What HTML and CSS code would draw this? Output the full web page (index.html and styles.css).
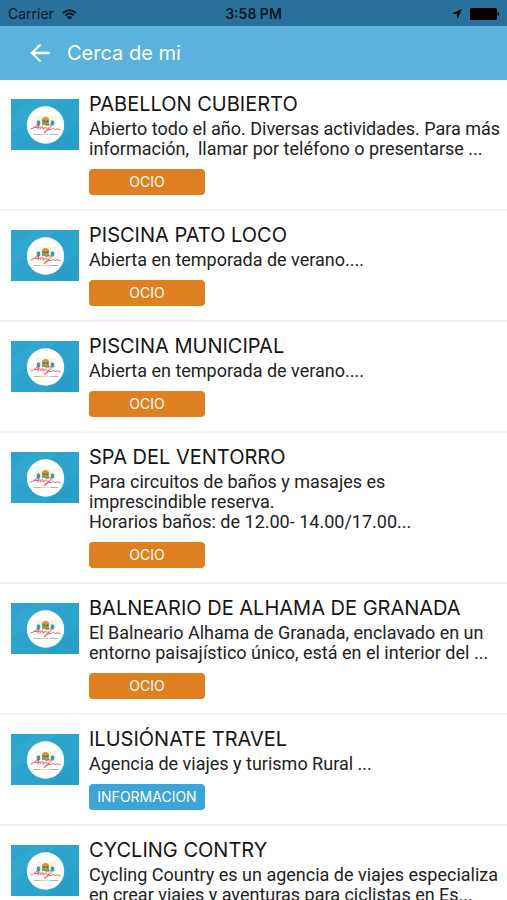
FILE: index.html
```html
<!DOCTYPE html>
<html lang="es">
<head>
<meta charset="utf-8">
<meta name="viewport" content="width=device-width, initial-scale=1">
<title>Cerca de mi</title>
<link rel="stylesheet" href="styles.css">
</head>
<body>
<svg class="sprite" aria-hidden="true">
  <symbol id="thumb" viewBox="0 0 68 51">
    <rect width="68" height="51" fill="#2ba3cc"/>
    <path d="M0 18 22 0H48L0 36Z" fill="#38a9cf" opacity=".6"/>
    <path d="M68 24V51H34Z" fill="#239bc5" opacity=".6"/>
    <circle cx="34.500" cy="26" r="18.700" fill="#fff"/>
    <path d="M25 17H45V29H25Z" fill="#faf3e2"/>
    <ellipse cx="27.500" cy="24" rx="1.900" ry="2.700" fill="#2b9fc4"/>
    <ellipse cx="41.500" cy="24" rx="1.900" ry="2.700" fill="#2b9fc4"/>
    <path d="M30.500 22Q31 18 34.500 18T38.500 22Z" fill="#d8953f"/>
    <path d="M31 21H38V26H31Z" fill="#7fa651"/>
    <path d="M32.500 21.500H34V23H32.500ZM35.500 21.500H37V23H35.500Z" fill="#a33f35"/>
    <path d="M20 30C22 30 26 26 27.500 25L27 30M24 28.500 29 28M29 30C30 28 31 27 32 28S30 31 33 29.500C35 27 36 31 38 29M35 26.500C39 25 42 26 39 28.500C37 30 35 34 33.500 33.500C32 33 37 30 39.500 30.500C41 31 41 29 42.500 29.500S43 31.500 44.500 30.500S46 30 49 30.500" fill="none" stroke="#e5435e" stroke-width=".9" stroke-linecap="round"/>
    <path d="M22.500 35.500H30" stroke="#b5c58d" stroke-width="1"/>
    <path d="M30 35.500H38" stroke="#efd998" stroke-width="1"/>
    <path d="M39 35.500H47" stroke="#94b9e8" stroke-width="1"/>
  </symbol>
</svg>
<div class="status">
  <div class="status-side">
    <span>Carrier</span>
    <svg class="wifi" viewBox="0 0 15 11" aria-hidden="true">
      <path d="M1 4Q7.500-1.500 14 4M3.200 6.300Q7.500 2.700 11.800 6.300" fill="none" stroke="currentColor" stroke-width="1.700"/>
      <path d="M4.800 8Q7.500 5.800 10.200 8L7.500 10.800Z" fill="currentColor"/>
    </svg>
  </div>
  <span class="time">3:58 PM</span>
  <div class="status-side status-right">
    <svg class="location" viewBox="0 0 10 10" aria-hidden="true"><path d="M10 0 5.500 10 5 5 0 4.500Z" fill="currentColor"/></svg>
    <svg class="battery" viewBox="0 0 29 12" aria-hidden="true"><rect width="27" height="12" rx="1.500" fill="currentColor"/><path d="M27.700 4Q29 4.200 29 6T27.700 8Z" fill="currentColor"/></svg>
  </div>
</div>
<header class="bar">
  <button class="back" type="button" aria-label="Volver">
    <svg viewBox="0 0 20 20" aria-hidden="true"><path d="M20 10H2M10.500 1.500 2 10 10.500 18.500" fill="none" stroke="currentColor" stroke-width="2.300"/></svg>
  </button>
  <h1>Cerca de mi</h1>
</header>
<main>
  <ul class="list">
    <li class="item">
      <svg class="thumb" aria-hidden="true"><use href="#thumb"/></svg>
      <div class="body">
        <h2>PABELLON CUBIERTO</h2>
        <p>Abierto todo el año. Diversas actividades. Para más<br>información, &nbsp;llamar por teléfono o presentarse ...</p>
        <span class="tag">OCIO</span>
      </div>
    </li>
    <li class="item">
      <svg class="thumb" aria-hidden="true"><use href="#thumb"/></svg>
      <div class="body">
        <h2>PISCINA PATO LOCO</h2>
        <p>Abierta en temporada de verano....</p>
        <span class="tag">OCIO</span>
      </div>
    </li>
    <li class="item">
      <svg class="thumb" aria-hidden="true"><use href="#thumb"/></svg>
      <div class="body">
        <h2>PISCINA MUNICIPAL</h2>
        <p>Abierta en temporada de verano....</p>
        <span class="tag">OCIO</span>
      </div>
    </li>
    <li class="item">
      <svg class="thumb" aria-hidden="true"><use href="#thumb"/></svg>
      <div class="body">
        <h2>SPA DEL VENTORRO</h2>
        <p>Para circuitos de baños y masajes es<br>imprescindible reserva.<br>Horarios baños: de 12.00- 14.00/17.00...</p>
        <span class="tag">OCIO</span>
      </div>
    </li>
    <li class="item">
      <svg class="thumb" aria-hidden="true"><use href="#thumb"/></svg>
      <div class="body">
        <h2>BALNEARIO DE ALHAMA DE GRANADA</h2>
        <p>El Balneario Alhama de Granada, enclavado en un<br>entorno paisajístico único, está en el interior del ...</p>
        <span class="tag">OCIO</span>
      </div>
    </li>
    <li class="item">
      <svg class="thumb" aria-hidden="true"><use href="#thumb"/></svg>
      <div class="body">
        <h2>ILUSIÓNATE TRAVEL</h2>
        <p>Agencia de viajes y turismo Rural ...</p>
        <span class="tag tag-info">INFORMACION</span>
      </div>
    </li>
    <li class="item">
      <svg class="thumb" aria-hidden="true"><use href="#thumb"/></svg>
      <div class="body">
        <h2>CYCLING CONTRY</h2>
        <p>Cycling Country es un agencia de viajes especializa<br>en crear viajes y aventuras para ciclistas en Es...</p>
      </div>
    </li>
  </ul>
</main>
</body>
</html>
```

FILE: styles.css
```css
* {
  box-sizing: border-box;
}

html {
  height: 100%;
  overflow: hidden;
}

body {
  height: 100%;
  margin: 0;
  overflow: hidden;
  background: #fff;
  color: #161616;
  font-family: Inter, Roboto, "Liberation Sans", sans-serif;
}

.sprite {
  display: none;
}

.status {
  display: flex;
  align-items: center;
  height: 26px;
  padding: 2px 8px 0;
  background: #29719c;
  color: #061722;
  font-size: 14px;
  line-height: 16px;
}

.status-side {
  display: flex;
  flex: 1;
  align-items: center;
  gap: 8px;
}

.status-right {
  justify-content: flex-end;
  color: #000;
}

.time {
  font-weight: 600;
}

.wifi {
  width: 15px;
  height: 11px;
}

.location {
  width: 10px;
  height: 10px;
}

.battery {
  width: 29px;
  height: 12px;
}

.bar {
  display: flex;
  align-items: center;
  gap: 17px;
  height: 54px;
  padding: 0 30px;
  background: #5ab2dd;
  color: #fff;
}

.back {
  width: 20px;
  height: 20px;
  padding: 0;
  border: 0;
  background: none;
  color: inherit;
}

.back svg {
  display: block;
  width: 20px;
  height: 20px;
}

h1 {
  margin: 0;
  font-size: 20px;
  font-weight: 400;
  line-height: 28px;
}

.list {
  margin: 0;
  padding: 0;
  list-style: none;
}

.item {
  display: flex;
  gap: 10px;
  padding: 10px 0 14px 11px;
  border-bottom: 2px solid #f3f3f3;
}

.thumb {
  flex: none;
  width: 68px;
  height: 51px;
  margin-top: 9px;
}

.body {
  flex: 1;
  min-width: 0;
}

h2 {
  margin: 0 0 1px;
  font-size: 20px;
  font-weight: 400;
  line-height: 28px;
}

p {
  margin: 0;
  color: #222;
  font-family: Roboto, Inter, "Liberation Sans", sans-serif;
  font-size: 18px;
  line-height: 20px;
}

.tag {
  display: block;
  width: 116px;
  margin-top: 10px;
  border-radius: 4px;
  background: #e07f20;
  color: #fff;
  font-size: 14px;
  line-height: 26px;
  text-align: center;
}

.tag-info {
  background: #3ba4d8;
}
```
